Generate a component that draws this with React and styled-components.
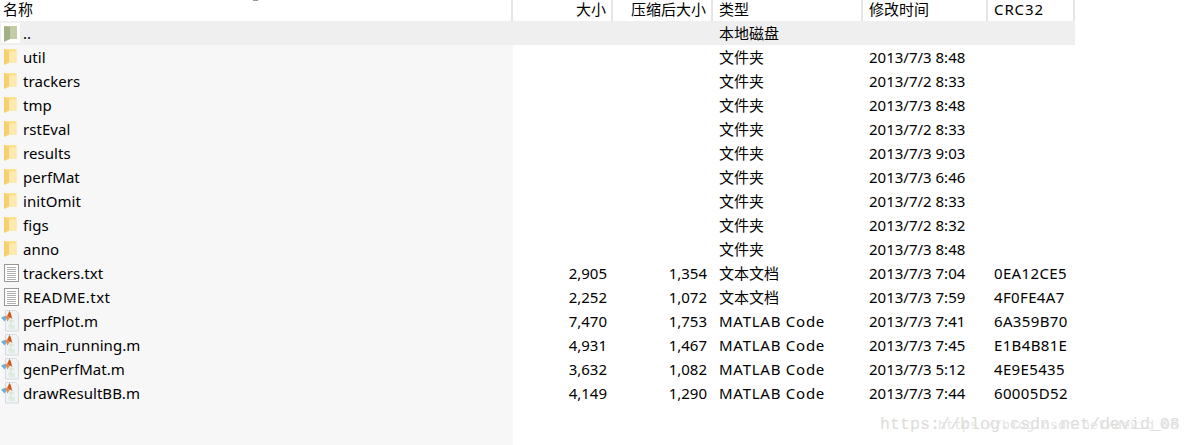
import React from "react";
import styled, { createGlobalStyle } from "styled-components";

const Global = createGlobalStyle`
  html, body { margin: 0; padding: 0; background: #fff; }
  body { font-family: "Noto Sans", "Noto Sans CJK SC", sans-serif; font-size: 15px; color: #000; }
`;

const COLS = "513px 100px 100px 150px 125px 87px";

const Page = styled.div`
  position: relative;
  width: 1190px;
  height: 445px;
  overflow: hidden;
  display: flex;
  flex-direction: column;
`;
const Header = styled.div`
  display: grid;
  grid-template-columns: ${COLS};
  height: 21px;
  flex: none;
`;
const HeadCell = styled.div`
  border-right: 2px solid #e5e5e5;
  padding-left: ${(p) => p.$pad || 0}px;
  padding-right: ${(p) => (p.$right ? 5 : 0)}px;
  text-align: ${(p) => (p.$right ? "right" : "left")};
  letter-spacing: ${(p) => p.$spacing || 0}px;
  line-height: 19px;
  font-size: 15px;
  white-space: nowrap;
`;
const Row = styled.div`
  display: grid;
  grid-template-columns: ${COLS};
  height: 24px;
  flex: none;
  background: ${(p) => (p.$up ? "#efefef" : "transparent")};
  width: 1075px;
`;
const NameCell = styled.div`
  display: flex;
  align-items: center;
  gap: 5px;
  padding-left: 2px;
  background: ${(p) => (p.$up ? "#efefef" : "#f7f7f7")};
  line-height: 24px;
`;
const NameText = styled.span`
  letter-spacing: ${(p) => (p.$caps ? 0.45 : 0.05)}px;
`;
const IconBox = styled.span`
  width: 16px;
  height: 18px;
  flex: none;
  display: block;
  svg { display: block; overflow: visible; }
`;
const NumCell = styled.div`
  text-align: right;
  padding-right: 6px;
  line-height: 24px;
`;
const TypeCell = styled.div`
  padding-left: 6px;
  line-height: 24px;
  white-space: nowrap;
  letter-spacing: ${(p) => (p.$latin ? 0.75 : 0)}px;
`;
const TimeCell = styled.div`
  padding-left: 6px;
  line-height: 24px;
  white-space: nowrap;
`;
const CrcCell = styled.div`
  padding-left: 6px;
  line-height: 24px;
  white-space: nowrap;
  letter-spacing: 0.35px;
`;
const Filler = styled.div`
  flex: 1;
  width: 513px;
  background: #f7f7f7;
`;
const Mark = styled.span`
  position: absolute;
  font-family: "Liberation Mono", monospace;
  font-size: ${(p) => p.$size}px;
  color: ${(p) => p.$color};
  left: ${(p) => p.$x}px;
  top: ${(p) => p.$y}px;
  white-space: nowrap;
  line-height: 20px;
`;
const Speck = styled.span`
  position: absolute;
  left: 253px;
  top: 0;
  width: 5px;
  height: 1px;
  background: #999;
`;

const Up = () => (
  <svg width="16" height="18" viewBox="0 0 16 18">
    <rect x="-1" y="-1" width="19" height="20" fill="#fff" />
    <path d="M2 2h13v13H8l-6 2z" fill="#c3cda5" />
    <path d="M2 2l6 1v12l-6 3z" fill="#a3b083" />
  </svg>
);
const Folder = () => (
  <svg width="16" height="18" viewBox="0 0 16 18">
    <path d="M2 1h12.5v13.5H7L2 17z" fill="#fde08d" />
    <path d="M7 3.5h7.5v11H7z" fill="#fee9ae" />
    <path d="M2 1l5 2v11.5L2 17z" fill="#f8cf6c" />
  </svg>
);
const Txt = () => (
  <svg width="16" height="18" viewBox="0 0 16 18">
    <rect x="2.5" y="0.5" width="14" height="17" fill="#fff" stroke="#979797" />
    <path d="M5 3.5h9M5 5.5h9M5 7.5h9M5 9.5h9M5 11.5h9M5 13.5h9M5 15.5h9" stroke="#b0b0b0" strokeWidth="1" />
  </svg>
);
const Matlab = () => (
  <svg width="16" height="18" viewBox="0 0 16 18">
    <path d="M3.5 -1.5h10l3 3v17.5h-13z" fill="#f1f4f6" stroke="#d3dae0" />
    <path d="M2 5l3-1.5 2.5-4.5 1.5 2.5 1.5 5.5-2.5-1.5-2.5 4-1.5-3.5z" fill="#e58a48" />
    <path d="M6 3.5l1.5-4.5 1 2 1 5.5-2-1.5z" fill="#c4562a" />
    <path d="M-1 5.5l3.5-1.5 2 2.5-2 3z" fill="#63b0de" />
    <path d="M7 9h5M9 7v7M6 14h7M7 16h6" stroke="#cbe2cd" strokeWidth="1" />
  </svg>
);

const ICON = { up: Up, folder: Folder, txt: Txt, m: Matlab };

const rows = [
  ["..", "up", "", "", "本地磁盘", "", ""],
  ["util", "folder", "", "", "文件夹", "2013/7/3 8:48", ""],
  ["trackers", "folder", "", "", "文件夹", "2013/7/2 8:33", ""],
  ["tmp", "folder", "", "", "文件夹", "2013/7/3 8:48", ""],
  ["rstEval", "folder", "", "", "文件夹", "2013/7/2 8:33", ""],
  ["results", "folder", "", "", "文件夹", "2013/7/3 9:03", ""],
  ["perfMat", "folder", "", "", "文件夹", "2013/7/3 6:46", ""],
  ["initOmit", "folder", "", "", "文件夹", "2013/7/2 8:33", ""],
  ["figs", "folder", "", "", "文件夹", "2013/7/2 8:32", ""],
  ["anno", "folder", "", "", "文件夹", "2013/7/3 8:48", ""],
  ["trackers.txt", "txt", "2,905", "1,354", "文本文档", "2013/7/3 7:04", "0EA12CE5"],
  ["README.txt", "txt", "2,252", "1,072", "文本文档", "2013/7/3 7:59", "4F0FE4A7"],
  ["perfPlot.m", "m", "7,470", "1,753", "MATLAB Code", "2013/7/3 7:41", "6A359B70"],
  ["main_running.m", "m", "4,931", "1,467", "MATLAB Code", "2013/7/3 7:45", "E1B4B81E"],
  ["genPerfMat.m", "m", "3,632", "1,082", "MATLAB Code", "2013/7/3 5:12", "4E9E5435"],
  ["drawResultBB.m", "m", "4,149", "1,290", "MATLAB Code", "2013/7/3 7:44", "60005D52"],
];

export default function App() {
  return (
    <Page>
      <Global />
      <Header>
        <HeadCell $pad={3}>名称</HeadCell>
        <HeadCell $right>大小</HeadCell>
        <HeadCell $right>压缩后大小</HeadCell>
        <HeadCell $pad={6}>类型</HeadCell>
        <HeadCell $pad={6}>修改时间</HeadCell>
        <HeadCell $pad={6} $spacing={0.9}>CRC32</HeadCell>
      </Header>
      {rows.map(([name, icon, size, packed, type, time, crc]) => {
        const Icon = ICON[icon];
        return (
          <Row key={name} $up={icon === "up"}>
            <NameCell $up={icon === "up"}>
              <IconBox><Icon /></IconBox>
              <NameText $caps={name === "README.txt"}>{name}</NameText>
            </NameCell>
            <NumCell>{size}</NumCell>
            <NumCell>{packed}</NumCell>
            <TypeCell $latin={icon === "m"}>{type}</TypeCell>
            <TimeCell>{time}</TimeCell>
            <CrcCell>{crc}</CrcCell>
          </Row>
        );
      })}
      <Filler />
      <Speck />
      <Mark $x={880} $y={415} $size={16.67} $color="#dcdcd8">https://blog.csdn.net/devid_08</Mark>
      <Mark $x={938} $y={416} $size={13.33} $color="#e4e4e4">https://blog.csdn.net/devid_08</Mark>
    </Page>
  );
}
